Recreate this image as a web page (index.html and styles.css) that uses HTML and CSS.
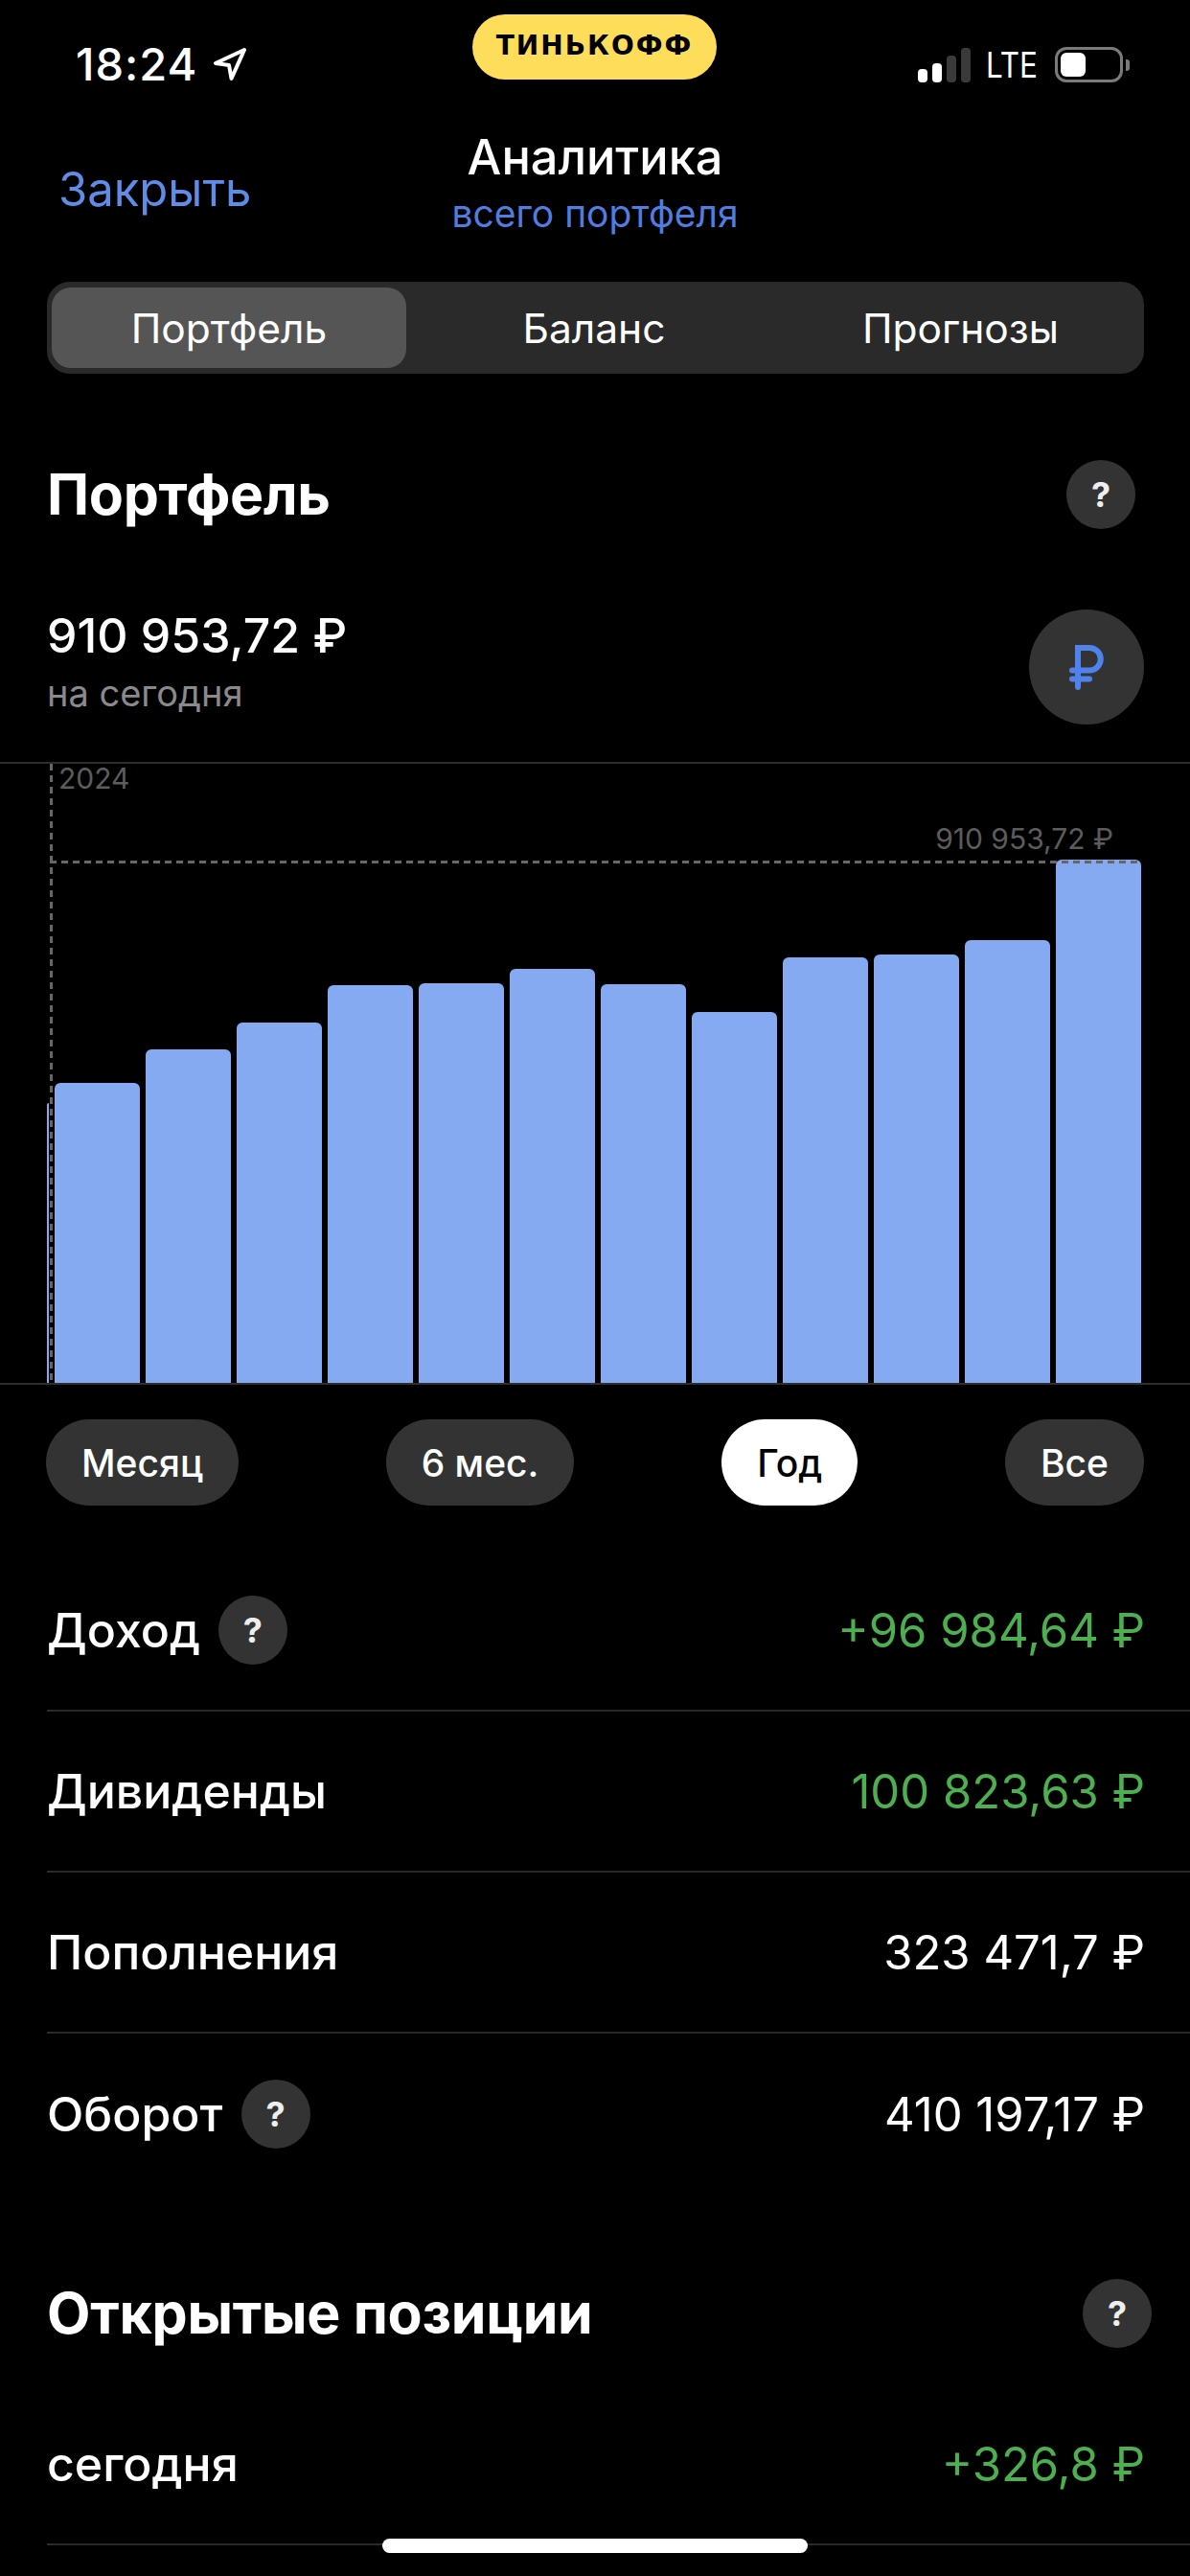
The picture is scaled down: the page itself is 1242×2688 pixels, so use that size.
FILE: index.html
```html
<!DOCTYPE html>
<html lang="ru">
<head>
  <meta charset="UTF-8" />
  <meta name="viewport" content="width=device-width, initial-scale=1.0" />
  <title>Аналитика</title>
  <link rel="stylesheet" href="styles.css">
</head>
<body>

  <!-- Статус-бар -->
  <div class="status-bar">
    <div class="status-left">
      <span class="time">18:24</span>
      <svg class="nav-arrow" viewBox="0 0 36 36" width="36" height="36">
        <path d="M33 3 L3 17 L17 19 L19.5 33 Z" fill="none" stroke="#fff" stroke-width="4" stroke-linejoin="round" />
      </svg>
    </div>
    <div class="brand">ТИНЬКОФФ</div>
    <div class="status-right">
      <div class="signal">
        <i class="on s1"></i><i class="on s2"></i><i class="s3"></i><i class="s4"></i>
      </div>
      <span class="lte">LTE</span>
      <div class="battery"><div class="battery-level"></div></div>
      <div class="battery-cap"></div>
    </div>
  </div>

  <!-- Навигация -->
  <div class="nav">
    <a class="nav-close">Закрыть</a>
    <div class="nav-title">
      <div class="nav-main">Аналитика</div>
      <div class="nav-sub">всего портфеля</div>
    </div>
  </div>

  <div class="tabs">
    <div class="tab active">Портфель</div>
    <div class="tab">Баланс</div>
    <div class="tab">Прогнозы</div>
  </div>

  <div class="section-head">
    <h2>Портфель</h2>
    <span class="help">?</span>
  </div>

  <div class="total">
    <div class="total-text">
      <div class="total-value">910 953,72 ₽</div>
      <div class="total-note">на сегодня</div>
    </div>
    <div class="currency">
      <svg viewBox="0 0 36 47" width="36" height="47">
        <path d="M9 44 V3 H21 A11.75 11.75 0 0 1 21 26.5 H3 M3 35.5 H21" fill="none" stroke="#4f82ea" stroke-width="6" stroke-linecap="round" />
      </svg>
    </div>
  </div>

  <!-- График -->
  <div class="chart">
    <div class="guide-v"></div>
    <div class="guide-h"></div>
    <span class="chart-year">2024</span>
    <span class="chart-max">910 953,72 ₽</span>
    <div class="bars">
      <div class="bar sliver" style="height: 292px"></div>
      <div class="bar" style="height: 313px"></div>
      <div class="bar" style="height: 348px"></div>
      <div class="bar" style="height: 376px"></div>
      <div class="bar" style="height: 415px"></div>
      <div class="bar" style="height: 417px"></div>
      <div class="bar" style="height: 432px"></div>
      <div class="bar" style="height: 416px"></div>
      <div class="bar" style="height: 387px"></div>
      <div class="bar" style="height: 444px"></div>
      <div class="bar" style="height: 447px"></div>
      <div class="bar" style="height: 462px"></div>
      <div class="bar" style="height: 546px"></div>
    </div>
  </div>

  <div class="periods">
    <div class="period">Месяц</div>
    <div class="period">6 мес.</div>
    <div class="period active">Год</div>
    <div class="period">Все</div>
  </div>

  <div class="rows">
    <div class="row">
      <div class="row-label">Доход <span class="help">?</span></div>
      <div class="row-value green">+96 984,64 ₽</div>
    </div>
    <div class="row">
      <div class="row-label">Дивиденды</div>
      <div class="row-value green">100 823,63 ₽</div>
    </div>
    <div class="row">
      <div class="row-label">Пополнения</div>
      <div class="row-value">323 471,7 ₽</div>
    </div>
    <div class="row no-line">
      <div class="row-label">Оборот <span class="help">?</span></div>
      <div class="row-value">410 197,17 ₽</div>
    </div>
  </div>

  <div class="section-head positions">
    <h2>Открытые позиции</h2>
    <span class="help">?</span>
  </div>

  <div class="rows">
    <div class="row">
      <div class="row-label">сегодня</div>
      <div class="row-value green">+326,8 ₽</div>
    </div>
  </div>

  <div class="home-indicator"></div>

</body>
</html>
```

FILE: styles.css
```css
* {
  box-sizing: border-box;
}

html, body {
  height: 2688px;
}

body {
  margin: 0;
  position: relative;
  overflow: hidden;
  background-color: #000;
  color: #fff;
  font-family: 'Inter', 'Roboto', sans-serif;
}

/* Статус-бар */
.status-bar {
  height: 130px;
  display: grid;
  grid-template-columns: 493px 255px 1fr;
  align-items: start;
}

.status-left {
  display: flex;
  align-items: center;
  gap: 16px;
  padding: 44px 0 0 79px;
}

.time {
  font-size: 47px;
  line-height: 46px;
  font-weight: 500;
  letter-spacing: 1px;
}

.brand {
  margin-top: 15px;
  height: 68px;
  border-radius: 34px;
  background-color: #fedd5b;
  color: #000;
  display: flex;
  align-items: center;
  justify-content: center;
  font-family: 'DejaVu Sans', sans-serif;
  font-size: 28px;
  font-weight: 700;
  letter-spacing: 2px;
  padding-bottom: 3px;
}

.status-right {
  display: flex;
  align-items: center;
  padding: 49px 0 0 210px;
}

.signal {
  display: flex;
  align-items: flex-end;
  gap: 5px;
  height: 36px;
  width: 56px;
}

.signal i {
  width: 10px;
  border-radius: 4px;
  background-color: #3a3a3a;
}

.signal i.on {
  background-color: #fff;
}

.s1 { height: 14px; }
.s2 { height: 20px; }
.s3 { height: 28px; }
.s4 { height: 36px; }

.lte {
  width: 56px;
  margin-left: 15px;
  font-size: 37px;
  line-height: 36px;
  transform: scaleX(0.85);
  transform-origin: left center;
}

.battery {
  width: 71px;
  height: 37px;
  margin-left: 16px;
  border: 3px solid #7a7a7a;
  border-radius: 12px;
  padding: 3px;
}

.battery-level {
  width: 26px;
  height: 100%;
  background-color: #fff;
  border-radius: 6px;
}

.battery-cap {
  width: 4px;
  height: 12px;
  margin-left: 3px;
  background-color: #7a7a7a;
  border-radius: 0 3px 3px 0;
}

/* Навигация */
.nav {
  height: 164px;
  display: flex;
  justify-content: center;
  position: relative;
}

.nav-close {
  position: absolute;
  left: 61px;
  top: 39px;
  font-size: 49px;
  line-height: 58px;
  color: #5f8ce6;
}

.nav-main {
  font-size: 50.5px;
  line-height: 60px;
  font-weight: 500;
  text-align: center;
  margin-top: 4px;
}

.nav-sub {
  font-size: 39px;
  line-height: 46px;
  color: #4f7de0;
  text-align: center;
  margin-top: 6px;
}

.tabs {
  margin: 0 48px 0 49px;
  height: 96px;
  padding: 6px 5px;
  background-color: #2a2a2a;
  border-radius: 24px;
  display: grid;
  grid-template-columns: 370px 392px 1fr;
}

.tab {
  display: flex;
  align-items: center;
  justify-content: center;
  font-size: 42.5px;
  font-weight: 400;
  border-radius: 20px;
}

.tab.active {
  background-color: #555;
}

.section-head {
  margin-top: 90px;
  padding: 0 57px 0 49px;
  display: flex;
  align-items: center;
  justify-content: space-between;
}

.section-head h2 {
  margin: 0;
  font-size: 59px;
  line-height: 72px;
  font-weight: 700;
  letter-spacing: -0.3px;
}

.help {
  width: 72px;
  height: 72px;
  flex: none;
  border-radius: 50%;
  background-color: #333;
  color: #eee;
  display: inline-flex;
  align-items: center;
  justify-content: center;
  font-size: 36px;
  font-weight: 700;
}

.total {
  margin-top: 84px;
  height: 120px;
  padding: 0 48px 0 49px;
  display: flex;
  align-items: flex-start;
  justify-content: space-between;
}

.total-text {
  margin-top: -3px;
}

.total-value {
  font-size: 50px;
  line-height: 60px;
  font-weight: 500;
}

.total-note {
  font-size: 38px;
  line-height: 46px;
  color: #8a8a8e;
  margin-top: 7px;
}

.currency {
  width: 120px;
  height: 120px;
  border-radius: 50%;
  background-color: #333;
  display: flex;
  align-items: center;
  justify-content: center;
}

/* График */
.chart {
  margin-top: 39px;
  height: 650px;
  border-top: 2px solid #2e2e2e;
  border-bottom: 2px solid #2e2e2e;
  position: relative;
  display: flex;
  align-items: flex-end;
}

.bars {
  display: flex;
  align-items: flex-end;
  gap: 6px;
  padding-left: 49px;
  width: 100%;
}

.bar {
  width: 89px;
  flex: none;
  background-color: #85aaf2;
  border-radius: 6px 6px 0 0;
}

.bar.sliver {
  width: 2px;
  border-radius: 2px 0 0 0;
}

.guide-v {
  position: absolute;
  left: 52px;
  top: 0;
  bottom: 0;
  width: 3px;
  z-index: 1;
  background: repeating-linear-gradient(to bottom, #666 0, #666 7px, transparent 7px, transparent 12px);
}

.guide-h {
  position: absolute;
  left: 52px;
  right: 51px;
  top: 101px;
  height: 3px;
  z-index: 1;
  background: repeating-linear-gradient(to right, #666 0, #666 7px, transparent 7px, transparent 12px);
}

.chart-year,
.chart-max {
  position: absolute;
  font-size: 30px;
  line-height: 36px;
  color: #5c5c5c;
}

.chart-year {
  left: 61px;
  top: -3px;
}

.chart-max {
  right: 80px;
  top: 60px;
}

.periods {
  margin-top: 36px;
  padding: 0 48px;
  display: flex;
  justify-content: space-between;
}

.period {
  height: 90px;
  padding: 0 37px;
  border-radius: 45px;
  background-color: #333;
  display: flex;
  align-items: center;
  font-size: 39px;
  font-weight: 500;
}

.period.active {
  background-color: #fff;
  color: #000;
}

.rows {
  margin-left: 49px;
}

.periods + .rows {
  margin-top: 47px;
}

.row {
  height: 168px;
  padding-right: 47px;
  border-bottom: 2px solid #2a2a2a;
  display: flex;
  align-items: center;
  justify-content: space-between;
}

.row.no-line {
  border-bottom: none;
}

.row-label {
  display: flex;
  align-items: center;
  gap: 19px;
  font-size: 50px;
  font-weight: 500;
}

.row-value {
  font-size: 49px;
  font-weight: 400;
}

.green {
  color: #4caf50;
}

.section-head.positions {
  margin-top: 88px;
  padding-right: 40px;
  margin-bottom: 38px;
}

.home-indicator {
  position: absolute;
  left: 399px;
  top: 2649px;
  width: 444px;
  height: 15px;
  background-color: #fff;
  border-radius: 8px;
}
```
